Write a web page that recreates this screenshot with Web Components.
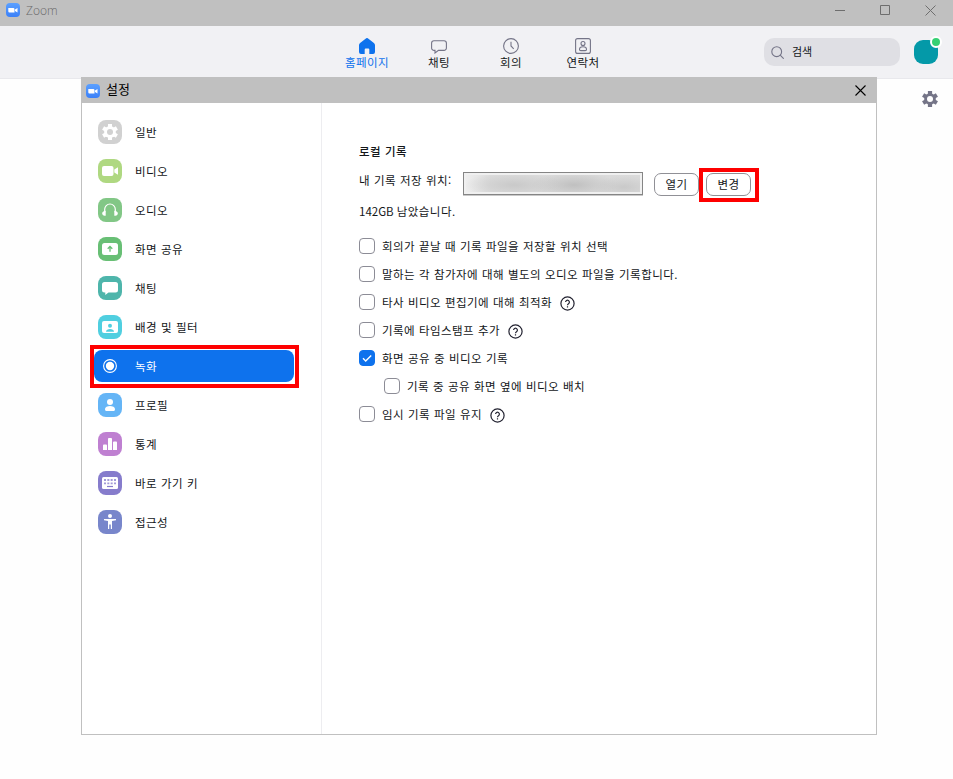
<!DOCTYPE html>
<html lang="ko">
<head>
<meta charset="utf-8">
<title>Zoom</title>
<style>
  html, body { margin: 0; height: 100%; overflow: hidden; }
  body {
    background: #fefefe;
    color: #131619;
    font: 11.5px/20px "Noto Sans CJK KR", sans-serif;
    letter-spacing: .44px;
    word-spacing: .3px;
  }
</style>
</head>
<body>
<zoom-app></zoom-app>

<script>
// Small helper, every component gets an open shadow root with its own styles
function mount(el, html) {
  el.attachShadow({ mode: "open" }).innerHTML = html;
}

// Glyphs for the settings menu, drawn on a 24px tile
const TILES = {
  general: ["#d1d1d1", `<circle cx="12" cy="12" r="5.900" fill="#fff"/><path d="M12 4v16M5.100 8l13.800 8M5.100 16l13.800-8" stroke="#fff" stroke-width="4"/><circle cx="12" cy="12" r="3" fill="#d1d1d1"/>`],
  video: ["#afd881", `<rect x="4" y="7" width="11.500" height="10" rx="2" fill="#fff"/><path fill="#fff" d="M16.300 10.500 20 8.200v7.600l-3.700-2.300z"/>`],
  audio: ["#82c786", `<path d="M6.700 14.500V11.300a5.300 5.300 0 0 1 10.600 0v3.200" fill="none" stroke="#fff" stroke-width="1.200"/><path fill="#fff" d="M7.700 12.800v5H6.500a2.400 2.400 0 0 1-1.300-4.400zM16.300 12.800v5h1.200a2.400 2.400 0 0 0 1.300-4.400z"/>`],
  share: ["#68bf75", `<rect x="4" y="6" width="16" height="12" rx="2.500" fill="#fff"/><path d="M12 14.800V10M9.700 11.800 12 9.500l2.300 2.300" fill="none" stroke="#68bf75" stroke-width="1.300"/>`],
  chat: ["#4eb5ab", `<path fill="#fff" d="M6.500 6h11A2.500 2.500 0 0 1 20 8.500v5.500a2.500 2.500 0 0 1-2.500 2.500h-7L7.300 19v-2.500h-.8A2.500 2.500 0 0 1 4 14V8.500A2.500 2.500 0 0 1 6.500 6z"/>`],
  background: ["#50cfe0", `<rect x="4" y="6" width="16" height="12" rx="2" fill="#fff"/><circle cx="12" cy="10.700" r="2" fill="#50cfe0"/><path fill="#50cfe0" d="M8 16.700c0-3.600 8-3.600 8 0z"/>`],
  record: ["none", `<circle cx="12" cy="12" r="6.400" fill="none" stroke="#fff" stroke-width="1.100"/><circle cx="12" cy="12" r="4.200" fill="#fff"/>`],
  profile: ["#65b5f6", `<circle cx="12" cy="9" r="3" fill="#fff"/><path fill="#fff" d="M7 16c0-4 10-4 10 0 0 2-1 2-2 2H9c-1 0-2 0-2-2z"/>`],
  stats: ["#bf80d1", `<path fill="#fff" d="M5 18v-4.600q0-.9.9-.9h2.200q.9 0 .9.900V18zM10 18V7q0-.9.900-.9h2.200q.9 0 .9.900v11zM15 18v-7.600q0-.9.900-.9h2.200q.9 0 .9.900V18z"/>`],
  keys: ["#867ccc", `<rect x="4" y="6" width="16" height="12" rx="1.500" fill="#fff"/><path d="M6 9h12M6 12.300h12" stroke="#a39bd8" stroke-width="1.800" stroke-dasharray="2 1.330"/><path d="M9 15.500h6" stroke="#867ccc" stroke-width="1.200"/>`],
  access: ["#7886cb", `<circle cx="12" cy="6" r="2" fill="#fff"/><path fill="#fff" d="M6 9h12v1.200l-4 .8v8h-1.200v-4.500h-1.600V19H10v-8l-4-.8z"/>`]
};

const GEAR = `<circle cx="8" cy="8" r="5.800" fill="#747487"/><path d="M8 0v16M1.100 4l13.800 8M1.100 12l13.800-8" stroke="#747487" stroke-width="4.200"/><circle cx="8" cy="8" r="3" fill="#fefefe"/>`;

const TABS = {
  home: `<path fill="#0e72ed" d="M6.900.4a1.800 1.800 0 0 1 2.200 0l5.800 4.700Q16 6 16 7.300V14a2 2 0 0 1-2 2h-3.700v-4.500a1 1 0 0 0-1-1H6.700a1 1 0 0 0-1 1V16H2a2 2 0 0 1-2-2V7.300Q0 6 1.100 5.100z"/>`,
  chat: `<path d="M3 2.700h10A2.400 2.400 0 0 1 15.400 5v5A2.400 2.400 0 0 1 13 12.400H7.500L4 15v-2.600H3A2.400 2.400 0 0 1 .6 10V5A2.400 2.400 0 0 1 3 2.700z"/>`,
  meet: `<circle cx="8" cy="8" r="7.400"/><path d="M8 3.700V8l2.700 2.800"/>`,
  contact: `<rect x=".6" y=".6" width="14.800" height="14.800" rx="2"/><circle cx="8" cy="5.500" r="2"/><path d="M4.500 11.400c0-3.500 7-3.500 7 0 0 1-.5 1.200-1.200 1.200H5.700c-.7 0-1.200-.2-1.200-1.200z"/>`
};

class ZoomLogo extends HTMLElement {
  constructor() {
    super();
    mount(this, `
      <style>
        :host { display: block; width: 14px; height: 14px; }
        svg { display: block; }
      </style>
      <svg width="14" height="14" viewBox="0 0 14 14">
        <defs><linearGradient id="g" x2="0" y2="1">
          <stop stop-color="#5ba0ff"/><stop offset="1" stop-color="#3b80f8"/>
        </linearGradient></defs>
        <rect width="14" height="14" rx="4" fill="url(#g)"/>
        <path fill="#fff" d="M2.300 5h5q1.200 0 1.200 1.200V9.500h-5Q2.300 9.500 2.300 8.300zM9 6.500l2.500-1.500v4.500L9 8z"/>
      </svg>
    `);
  }
}

class TitleBar extends HTMLElement {
  constructor() {
    super();
    mount(this, `
      <style>
        :host {
          display: flex;
          align-items: flex-start;
          height: 26px;
          padding: 3px 17px 0 6px;
          box-sizing: border-box;
          background: #c0c0c0;
          color: #6a6a6a;
        }
        span {
          margin: -2px auto 0 6px;
          font: 300 12px/20px "Open Sans", sans-serif;
          letter-spacing: 0;
        }
        svg { fill: none; stroke: #6e6e6e; margin-top: 1px; }
      </style>
      <zoom-logo></zoom-logo>
      <span><slot></slot></span>
      <svg width="102" height="12" viewBox="0 0 102 12">
        <path d="M1 6.500h10M46.500 1.500h9v9h-9zM91.500 1.500l10 10M101.500 1.500l-10 10"/>
      </svg>
    `);
  }
}

class NavTab extends HTMLElement {
  connectedCallback() {
    mount(this, `
      <style>
        :host {
          display: flex;
          flex-direction: column;
          align-items: center;
          width: 72px;
        }
        :host([active]) { color: #0e72ed; }
        svg { display: block; fill: none; stroke: #747487; stroke-width: 1.100; }
        :host([active]) svg { stroke: none; }
        span { line-height: 16px; }
      </style>
      <svg width="16" height="16" viewBox="0 0 16 16">${TABS[this.getAttribute("icon")]}</svg>
      <span><slot></slot></span>
    `);
  }
}

class NavBar extends HTMLElement {
  constructor() {
    super();
    mount(this, `
      <style>
        :host {
          display: flex;
          height: 53px;
          padding: 0 15px 0 331px;
          box-sizing: border-box;
          background: #f1f1f4;
          border-bottom: 1px solid #e8e8ec;
        }
        nav { display: flex; flex: 1; padding-top: 12px; }
        .search {
          display: flex;
          align-items: center;
          gap: 8px;
          width: 136px;
          height: 28px;
          margin: 12px 14px 0 0;
          padding-left: 7px;
          box-sizing: border-box;
          border-radius: 10px;
          background: #dfdfe4;
        }
        .search svg { fill: none; stroke: #747487; stroke-width: 1.100; }
        .search span { margin-top: -3px; font-size: 11px; letter-spacing: 0; }
        .avatar {
          position: relative;
          width: 24px;
          height: 24px;
          margin-top: 14px;
          border-radius: 9px;
          background: #0499a8;
        }
        .avatar i {
          position: absolute;
          top: -4px;
          right: -4px;
          width: 8px;
          height: 8px;
          border: 2px solid #fff;
          border-radius: 50%;
          background: #35d073;
        }
      </style>
      <nav>
        <nav-tab icon="home" active>홈페이지</nav-tab>
        <nav-tab icon="chat">채팅</nav-tab>
        <nav-tab icon="meet">회의</nav-tab>
        <nav-tab icon="contact">연락처</nav-tab>
      </nav>
      <div class="search">
        <svg width="13" height="13" viewBox="0 0 13 13"><circle cx="5.700" cy="5.700" r="4.900"/><path d="m9.200 9.200 3.500 3.500"/></svg>
        <span>검색</span>
      </div>
      <div class="avatar"><i></i></div>
    `);
  }
}

class MenuItem extends HTMLElement {
  connectedCallback() {
    const [color, glyph] = TILES[this.getAttribute("icon")];
    mount(this, `
      <style>
        :host {
          position: relative;
          display: flex;
          align-items: center;
          gap: 13px;
          width: 200px;
          height: 32px;
          padding-left: 4px;
          box-sizing: border-box;
          border-radius: 8px;
        }
        :host([selected]) { background: #0e72ed; color: #fff; }
        span { margin-top: -1px; }
        /* red frame around the chosen page */
        :host([selected])::after {
          content: "";
          position: absolute;
          inset: -5px -5px -6px -4px;
          border: 4px solid #fe0000;
        }
      </style>
      <svg width="24" height="24" viewBox="0 0 24 24"><rect width="24" height="24" rx="8" fill="${color}"/>${glyph}</svg>
      <span><slot></slot></span>
    `);
  }
}

class CheckOption extends HTMLElement {
  connectedCallback() {
    const help = this.hasAttribute("help") ? `
      <svg class="help" width="15" height="15" viewBox="0 0 15 15">
        <circle cx="7.500" cy="7.500" r="6.600"/>
        <path d="M5.600 6.100a1.900 1.900 0 1 1 2.900 1.600q-1 .6-1 1.500M7.500 10.200v1.300"/>
      </svg>` : "";
    mount(this, `
      <style>
        :host { display: flex; align-items: center; height: 28px; }
        :host([nested]) { padding-left: 25px; }
        .box {
          display: grid;
          width: 16px;
          height: 16px;
          margin-right: 7px;
          box-sizing: border-box;
          border: 1px solid #8c8c96;
          border-radius: 4px;
          background: #fff;
        }
        :host([checked]) .box { background: #0e72ed; border-color: #0e72ed; }
        .box svg { display: none; fill: none; stroke: #fff; stroke-width: 1.400; }
        :host([checked]) .box svg { display: block; }
        span { margin-top: -1px; }
        .help { margin: 2px 0 0 8px; fill: none; stroke: #222230; stroke-width: 1.200; }
      </style>
      <div class="box"><svg width="14" height="14" viewBox="0 0 14 14"><path d="m3 7.200 2.700 2.700L11.200 4.400"/></svg></div>
      <span><slot></slot></span>${help}
    `);
  }
}

class PillButton extends HTMLElement {
  constructor() {
    super();
    mount(this, `
      <style>
        :host {
          position: relative;
          display: block;
          width: 45px;
          height: 23px;
          box-sizing: border-box;
          border: 1px solid #909096;
          border-radius: 7px;
          line-height: 20px;
          text-align: center;
        }
        :host([marked])::after {
          content: "";
          position: absolute;
          inset: -6px -9px -7px -8px;
          border: 4px solid #fe0000;
        }
      </style>
      <slot></slot>
    `);
  }
}

class RecordingPage extends HTMLElement {
  constructor() {
    super();
    mount(this, `
      <style>
        :host { display: block; padding: 38px 0 0 37px; }
        h2 { margin: 0; font-size: 11.5px; font-weight: 500; line-height: 20px; }
        .path { display: flex; height: 24px; margin-top: 11px; }
        .path > span { width: 104px; margin-top: -2px; }
        .field {
          width: 180px;
          height: 23px;
          margin-right: 11px;
          padding: 2px;
          box-sizing: border-box;
          border: 1px solid #858585;
          box-shadow: 0 1px #c9c9c9;
          background: #f0f0f0;
        }
        /* the saved path is blurred out */
        .field i {
          display: block;
          height: 100%;
          background:
            radial-gradient(ellipse 50px 13px at 48px 10px, #c9c9c9, transparent),
            radial-gradient(ellipse 44px 13px at 108px 10px, #c0c0c0, transparent),
            radial-gradient(ellipse 30px 11px at 158px 12px, #c9c9c9, transparent),
            linear-gradient(90deg, #eee, #dedede 24px, #dadada);
        }
        pill-button { margin: 1px 7px 0 0; }
        .free { margin: 5px 0 11px; word-spacing: -.5px; }
        .size { letter-spacing: 0; }
      </style>
      <h2>로컬 기록</h2>
      <div class="path">
        <span>내 기록 저장 위치:</span>
        <div class="field"><i></i></div>
        <pill-button>열기</pill-button>
        <pill-button marked>변경</pill-button>
      </div>
      <div class="free"><span class="size">142GB</span> 남았습니다.</div>
      <check-option>회의가 끝날 때 기록 파일을 저장할 위치 선택</check-option>
      <check-option>말하는 각 참가자에 대해 별도의 오디오 파일을 기록합니다.</check-option>
      <check-option help>타사 비디오 편집기에 대해 최적화</check-option>
      <check-option help>기록에 타임스탬프 추가</check-option>
      <check-option checked>화면 공유 중 비디오 기록</check-option>
      <check-option nested>기록 중 공유 화면 옆에 비디오 배치</check-option>
      <check-option help>임시 기록 파일 유지</check-option>
    `);
  }
}

class SettingsDialog extends HTMLElement {
  constructor() {
    super();
    mount(this, `
      <style>
        :host {
          display: flex;
          flex-direction: column;
          box-sizing: border-box;
          border: 1px solid #c0c0c0;
          background: #fff;
        }
        header {
          display: flex;
          align-items: center;
          height: 25px;
          padding: 0 10px 0 4px;
          box-sizing: border-box;
          background: #c0c0c0;
          color: #000;
        }
        header span { margin: -3px auto 0 6px; font-size: 13px; letter-spacing: 0; }
        header svg { stroke: #000; stroke-width: 1.100; }
        main { display: grid; grid-template-columns: 240px 1fr; flex: 1; }
        aside {
          display: flex;
          flex-direction: column;
          gap: 7px;
          padding: 13px 0 0 12px;
          border-right: 1px solid #ededf0;
        }
      </style>
      <header>
        <zoom-logo></zoom-logo>
        <span>설정</span>
        <svg width="11" height="11" viewBox="0 0 11 11"><path d="m.5.500 10 10M10.500.500l-10 10"/></svg>
      </header>
      <main>
        <aside>
          <menu-item icon="general">일반</menu-item>
          <menu-item icon="video">비디오</menu-item>
          <menu-item icon="audio">오디오</menu-item>
          <menu-item icon="share">화면 공유</menu-item>
          <menu-item icon="chat">채팅</menu-item>
          <menu-item icon="background">배경 및 필터</menu-item>
          <menu-item icon="record" selected>녹화</menu-item>
          <menu-item icon="profile">프로필</menu-item>
          <menu-item icon="stats">통계</menu-item>
          <menu-item icon="keys">바로 가기 키</menu-item>
          <menu-item icon="access">접근성</menu-item>
        </aside>
        <recording-page></recording-page>
      </main>
    `);
  }
}

class ZoomApp extends HTMLElement {
  constructor() {
    super();
    mount(this, `
      <style>
        :host { display: block; position: relative; height: 100vh; }
        .gear { display: block; margin: 12px 15px 0 auto; }
        /* floats above the main window */
        settings-dialog {
          position: absolute;
          left: 81px;
          top: 77px;
          width: 796px;
          height: 658px;
        }
      </style>
      <title-bar>Zoom</title-bar>
      <nav-bar></nav-bar>
      <svg class="gear" width="16" height="16" viewBox="0 0 16 16">${GEAR}</svg>
      <settings-dialog></settings-dialog>
    `);
  }
}

customElements.define("zoom-logo", ZoomLogo);
customElements.define("title-bar", TitleBar);
customElements.define("nav-tab", NavTab);
customElements.define("nav-bar", NavBar);
customElements.define("menu-item", MenuItem);
customElements.define("check-option", CheckOption);
customElements.define("pill-button", PillButton);
customElements.define("recording-page", RecordingPage);
customElements.define("settings-dialog", SettingsDialog);
customElements.define("zoom-app", ZoomApp);
</script>
</body>
</html>
